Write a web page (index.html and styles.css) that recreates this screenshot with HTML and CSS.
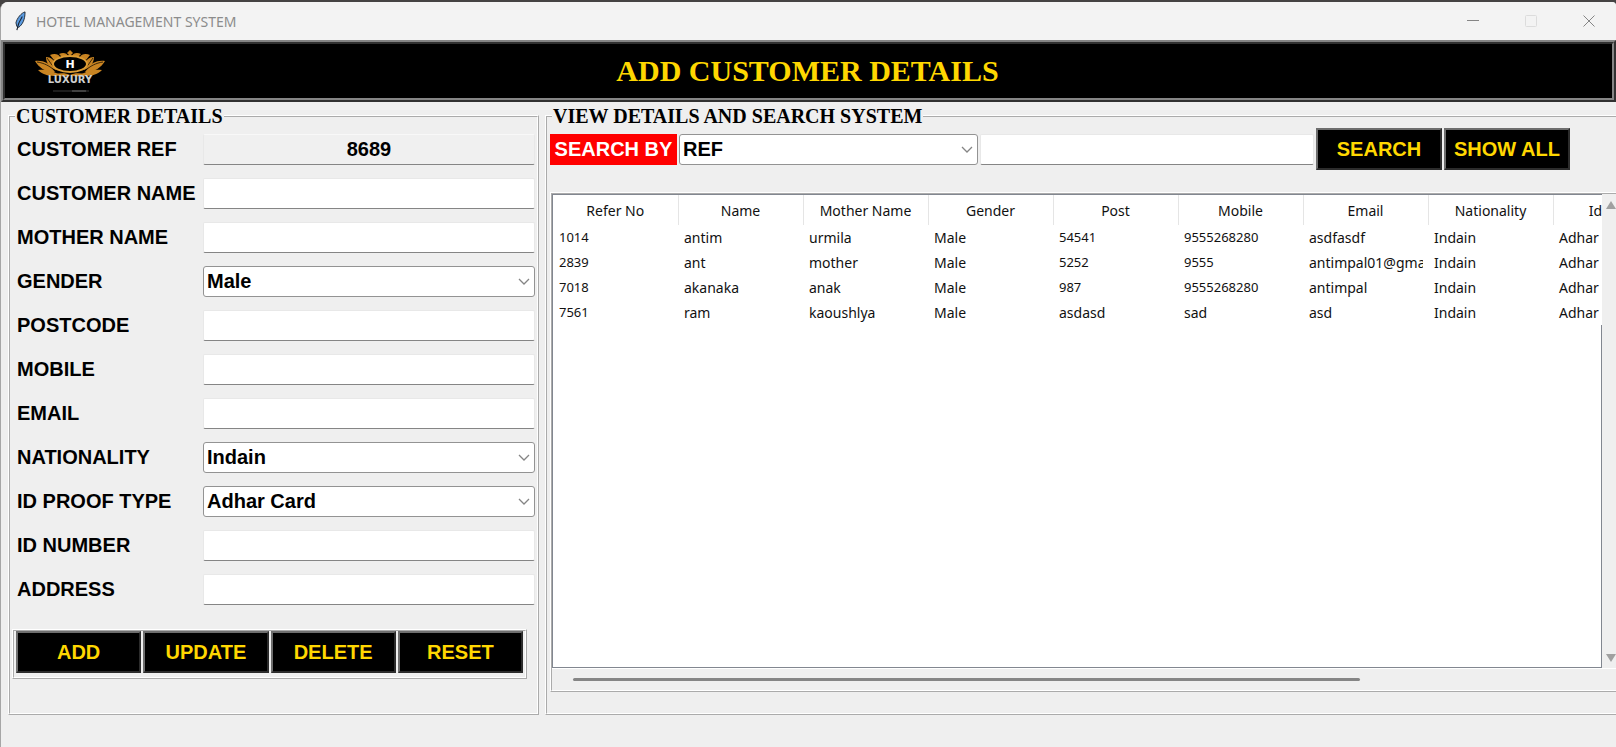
FILE: index.html
```html
<!DOCTYPE html>
<html lang="en">
<head>
<meta charset="utf-8">
<title>HOTEL MANAGEMENT SYSTEM</title>
<link rel="stylesheet" href="styles.css">
</head>
<body>
<div class="window">
  <header class="titlebar">
    <svg class="feather" viewBox="0 0 14 22" aria-hidden="true">
      <path d="M12 1C8 2 3 8 2 13l1 4 2 1c4-3 7-8 7-17z" fill="#5b9be0" stroke="#1b2430" stroke-width="1"/>
      <path d="M9 6C7 9 4 14 3 21" fill="none" stroke="#1b2430" stroke-width="1.2"/>
    </svg>
    <span class="caption">HOTEL MANAGEMENT SYSTEM</span>
    <div class="controls">
      <button class="control" aria-label="Minimize"><svg viewBox="0 0 12 12"><path d="M0 5.500h12"/></svg></button>
      <button class="control faded" aria-label="Maximize" disabled><svg viewBox="0 0 12 12"><rect x=".5" y=".5" width="11" height="11" rx="1"/></svg></button>
      <button class="control" aria-label="Close"><svg viewBox="0 0 12 12"><path d="M.5.5l11 11M11.500.5l-11 11"/></svg></button>
    </div>
  </header>

  <div class="banner">
    <svg class="logo" viewBox="-2 0 126 54" role="img" aria-label="H Luxury">
      <rect x="-2" width="126" height="54" fill="#000"/>
      <g fill="#c98422">
        <path d="M63 6l3 3-3 3-3-3z"/>
        <path d="M52 10c4-2 8-1 9 2l-6 1zM74 10c-4-2-8-1-9 2l6 1z"/>
        <path d="M43 11c4-2 9-1 10 2l-6 3zM83 11c-4-2-9-1-10 2l6 3z"/>
        <path d="M39 13c5 0 8 3 9 7l1 6c-6-2-10-7-10-13zM87 13c-5 0-8 3-9 7l-1 6c6-2 10-7 10-13z"/>
        <path d="M28 17c8-1 14 2 17 7l3 4c-8 1-16-4-20-11zM98 17c-8-1-14 2-17 7l-3 4c8 1 16-4 20-11z"/>
        <path d="M31 26c7-1 13 0 18 3l5 2c-8 2-17 1-23-5zM95 26c-7-1-13 0-18 3l-5 2c8 2 17 1 23-5z"/>
        <path d="M48 30c6-1 11-1 15 1 4-2 9-2 15-1-5 3-11 3-15 1-4 2-10 2-15-1z"/>
      </g>
      <g fill="none" stroke="#000" stroke-width=".7">
        <path d="M30 18c7 1 13 4 18 9M96 18c-7 1-13 4-18 9M40 14c3 4 5 8 9 11M86 14c-3 4-5 8-9 11"/>
      </g>
      <ellipse cx="63" cy="20" rx="17" ry="8" fill="#000" stroke="#dc9c34" stroke-width="2"/>
      <text x="63" y="24" class="logo-initial">H</text>
      <text x="63" y="39" class="logo-name">LUXURY</text>
      <path d="M46 47h36" stroke="#3a3a3a"/>
      <path d="M65 47h14" stroke="#666"/>
    </svg>
    <h1 class="heading">ADD CUSTOMER DETAILS</h1>
  </div>

  <main class="content">
    <fieldset class="panel">
      <legend>CUSTOMER DETAILS</legend>
      <form class="form">
        <label for="ref">CUSTOMER REF</label><input id="ref" class="entry entry-ref" value="8689" readonly>
        <label for="name">CUSTOMER NAME</label><input id="name" class="entry">
        <label for="mother">MOTHER NAME</label><input id="mother" class="entry">
        <label for="gender">GENDER</label>
        <div class="combo"><select id="gender"><option>Male</option><option>Female</option></select><svg viewBox="0 0 12 7"><path d="M1 1l5 5 5-5"/></svg></div>
        <label for="postcode">POSTCODE</label><input id="postcode" class="entry">
        <label for="mobile">MOBILE</label><input id="mobile" class="entry">
        <label for="email">EMAIL</label><input id="email" class="entry">
        <label for="nationality">NATIONALITY</label>
        <div class="combo"><select id="nationality"><option>Indain</option></select><svg viewBox="0 0 12 7"><path d="M1 1l5 5 5-5"/></svg></div>
        <label for="proof">ID PROOF TYPE</label>
        <div class="combo"><select id="proof"><option>Adhar Card</option></select><svg viewBox="0 0 12 7"><path d="M1 1l5 5 5-5"/></svg></div>
        <label for="idnumber">ID NUMBER</label><input id="idnumber" class="entry">
        <label for="address">ADDRESS</label><input id="address" class="entry">
      </form>
      <div class="actions">
        <button class="action">ADD</button>
        <button class="action">UPDATE</button>
        <button class="action">DELETE</button>
        <button class="action">RESET</button>
      </div>
    </fieldset>

    <fieldset class="panel panel-view">
      <legend>VIEW DETAILS AND SEARCH SYSTEM</legend>
      <form class="search">
        <label class="search-label" for="by">SEARCH BY</label>
        <div class="combo"><select id="by"><option>REF</option><option>MOBILE</option></select><svg viewBox="0 0 12 7"><path d="M1 1l5 5 5-5"/></svg></div>
        <input class="entry" aria-label="Search text">
        <button type="button" class="action">SEARCH</button>
        <button type="button" class="action">SHOW ALL</button>
      </form>
      <div class="results">
        <div class="sheet">
          <table>
            <thead>
              <tr><th>Refer No</th><th>Name</th><th>Mother Name</th><th>Gender</th><th>Post</th><th>Mobile</th><th>Email</th><th>Nationality</th><th class="last">Id</th></tr>
            </thead>
            <tbody>
              <tr><td class="num">1014</td><td>antim</td><td>urmila</td><td>Male</td><td class="num">54541</td><td class="num">9555268280</td><td>asdfasdf</td><td>Indain</td><td>Adhar</td></tr>
              <tr><td class="num">2839</td><td>ant</td><td>mother</td><td>Male</td><td class="num">5252</td><td class="num">9555</td><td><span class="clip">antimpal01@gmail.com</span></td><td>Indain</td><td>Adhar</td></tr>
              <tr><td class="num">7018</td><td>akanaka</td><td>anak</td><td>Male</td><td class="num">987</td><td class="num">9555268280</td><td>antimpal</td><td>Indain</td><td>Adhar</td></tr>
              <tr><td class="num">7561</td><td>ram</td><td>kaoushlya</td><td>Male</td><td>asdasd</td><td>sad</td><td>asd</td><td>Indain</td><td>Adhar</td></tr>
            </tbody>
          </table>
          <div class="sheet-rest"></div>
        </div>
        <div class="vscroll">
          <svg viewBox="0 0 10 8"><path d="M5 0l5 8H0z"/></svg>
          <svg viewBox="0 0 10 8"><path d="M0 0h10L5 8z"/></svg>
        </div>
        <div class="hscroll"><div class="thumb"></div></div>
      </div>
    </fieldset>
  </main>
</div>
</body>
</html>
```
FILE: styles.css
```css
* { box-sizing: border-box; }

body {
  margin: 0;
  background: #454343;
  font-family: "Liberation Sans", Arial, sans-serif;
  overflow: hidden;
}

.window {
  display: flex;
  flex-direction: column;
  min-height: calc(100vh - 2px);
  margin-top: 2px;
  border-left: 1px solid #a6a6a6;
  border-radius: 8px 4px 0 0;
  background: #efefef;
  overflow: hidden;
}

/* Title bar */
.titlebar {
  display: flex;
  align-items: center;
  height: 38px;
  padding-left: 13px;
  background: #f3f3f3;
}
.feather { width: 13px; height: 20px; margin-right: 9px; }
.caption {
  flex: 1;
  color: #8c8c8c;
  font: 14px "Noto Sans", sans-serif;
}
.controls { display: flex; }
.control {
  display: flex;
  align-items: center;
  justify-content: center;
  width: 58px;
  height: 38px;
  padding: 0;
  border: 0;
  background: none;
}
.control:last-child { width: 52px; margin-left: 4px; padding-right: 2px; }
.control svg { width: 12px; height: 12px; fill: none; stroke: #858585; }
.control.faded svg { stroke: #dcdcdc; }

/* Banner */
.banner {
  display: grid;
  grid-template-columns: 126px 1fr 128px;
  align-items: center;
  height: 62px;
  border: 4px ridge #858585;
  background: #000;
}
.logo { display: block; width: 126px; height: 54px; }
.logo-initial { font: bold 11px "DejaVu Sans", sans-serif; fill: #fff; text-anchor: middle; }
.logo-name { font: bold 10px "DejaVu Sans", sans-serif; fill: #d0d0d0; text-anchor: middle; }
.heading {
  margin: 0;
  color: #ffd700;
  font: bold 30px "Liberation Serif", "Times New Roman", serif;
  text-align: center;
}

/* Panels */
.content {
  display: grid;
  grid-template-columns: 531px minmax(0, 1fr);
  gap: 6px;
  padding: 3px 0 0 7px;
}
.panel {
  min-width: 0;
  margin: 0;
  padding: 0 2px 34px 7px;
  border: 2px ridge #fff;
}
.panel legend {
  height: 22px;
  margin-left: -2px;
  padding: 0 1px;
  font: bold 20px/22px "Liberation Serif", "Times New Roman", serif;
}
.panel-view { padding: 0 0 20px 3px; border-right: 0; }
.panel-view legend { margin-left: 2px; }

/* Form */
.form {
  display: grid;
  grid-template-columns: 186px minmax(0, 1fr);
  grid-auto-rows: 44px;
  align-items: center;
}
.form label { font-size: 20px; font-weight: bold; }
.entry, .combo select {
  width: 100%;
  height: 31px;
  margin: 0;
  font: bold 20px "Liberation Sans", Arial, sans-serif;
  color: #000;
  background: #fff;
}
.entry {
  padding: 0 4px;
  border: 1px solid #e8e8e8;
  border-bottom-color: #858585;
  border-radius: 2px;
}
.entry-ref { background: #f0f0f0; text-align: center; border-top-color: #f8f8f8; }
.combo { position: relative; }
.combo select {
  display: block;
  padding: 0 24px 0 3px;
  border: 1px solid #939393;
  border-radius: 3px;
  appearance: none;
}
.combo svg {
  position: absolute;
  right: 5px;
  top: 12px;
  width: 12px;
  height: 7px;
  fill: none;
  stroke: #858585;
  stroke-width: 1.3;
  pointer-events: none;
}

.actions {
  display: grid;
  grid-template-columns: repeat(4, 1fr);
  gap: 2px;
  margin: 18px 8px 0 -5px;
  padding: 0 2px 4px;
  border: 2px ridge #fff;
}
.action {
  height: 42px;
  padding: 0;
  border: 2px solid #2c2c2c;
  border-top-color: #6e6e6e;
  border-left-color: #6e6e6e;
  background: #000;
  color: #ffd700;
  font: bold 20px "Liberation Sans", Arial, sans-serif;
}

/* Search */
.search {
  display: grid;
  grid-template-columns: 127px 299px 334px 126px 126px;
  align-items: center;
  gap: 2px;
  padding-top: 1px;
}
.search-label {
  background: #f00;
  color: #fff;
  font-size: 20px;
  font-weight: bold;
  line-height: 31px;
  text-align: center;
}

/* Results */
.results {
  display: grid;
  grid-template-columns: minmax(0, 1fr) 14px;
  grid-template-rows: 474px 22px;
  margin-top: 22px;
  border: 2px ridge #fff;
  border-right: 0;
}
.sheet {
  display: flex;
  flex-direction: column;
  overflow: hidden;
  border-top: 1px solid #828790;
  border-left: 1px solid #828790;
  background: #fff;
}
.sheet-rest {
  flex: 1;
  border: 1px solid #828790;
  border-width: 0 1px 1px 0;
}
table {
  width: 100%;
  table-layout: fixed;
  border-collapse: collapse;
  font: 14px "Noto Sans", sans-serif;
  color: #111;
}
th {
  width: 125px;
  height: 30px;
  padding: 0;
  border-right: 1px solid #e5e5e5;
  font-weight: normal;
}
th.last { width: auto; border: 0; text-align: right; }
td {
  height: 25px;
  padding: 0 0 0 6px;
  line-height: 25px;
  white-space: nowrap;
}
.clip { display: block; margin-right: 5px; overflow: hidden; }
.num { font-size: 13px; }
.vscroll {
  display: flex;
  flex-direction: column;
  justify-content: space-between;
  padding: 7px 0 6px 4px;
  overflow: hidden;
}
.vscroll svg { flex: none; width: 10px; height: 8px; fill: #a0a0a0; }
.hscroll {
  grid-column: 1 / -1;
  padding: 9px 256px 0 21px;
  border-top: 1px solid #fff;
}
.thumb { height: 3px; border-radius: 2px; background: #858585; }
```
